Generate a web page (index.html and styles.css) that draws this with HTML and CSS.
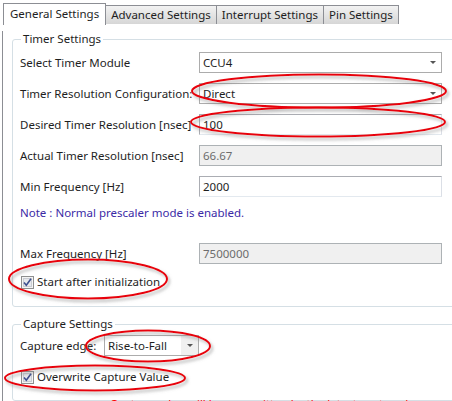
FILE: index.html
```html
<!DOCTYPE html>
<html>
<head>
<meta charset="utf-8">
<link rel="stylesheet" href="styles.css">
</head>
<body>
<div class="tabs">
  <div class="tab active">General Settings</div>
  <div class="tab">Advanced Settings</div>
  <div class="tab">Interrupt Settings</div>
  <div class="tab">Pin Settings</div>
</div>
<div class="panel">
  <fieldset class="group timer">
    <legend>Timer Settings</legend>
    <div class="form">
      <label class="lbl">Select Timer Module</label>
      <div class="box combo"><span>CCU4</span><span class="btn"><i class="arrow"></i></span></div>
      <label class="lbl">Timer Resolution Configuration:</label>
      <div class="box combo"><span>Direct</span><span class="btn"><i class="arrow"></i></span></div>
      <label class="lbl">Desired Timer Resolution [nsec]</label>
      <div class="box">100</div>
      <label class="lbl">Actual Timer Resolution [nsec]</label>
      <div class="box disabled">66.67</div>
      <label class="lbl">Min Frequency [Hz]</label>
      <div class="box">2000</div>
    </div>
    <div class="note">Note : Normal prescaler mode is enabled.</div>
    <div class="form max">
      <label class="lbl">Max Frequency [Hz]</label>
      <div class="box disabled">7500000</div>
    </div>
    <div class="check">
      <svg class="cb" width="13" height="13" viewBox="0 0 13 13"><rect x="0.5" y="0.5" width="12" height="12" fill="#f4f4f4" stroke="#8e8f8f"/><rect x="2.5" y="2.5" width="8" height="8" fill="#e6e8ec" stroke="#c9ccd2"/><path d="M3 6.5 L5.3 9.2 L10 2.8" fill="none" stroke="#3d4f8e" stroke-width="1.6"/></svg>
      <span>Start after initialization</span>
    </div>
  </fieldset>
  <fieldset class="group capture">
    <legend>Capture Settings</legend>
    <div class="edge">
      <label class="lbl">Capture edge:</label>
      <div class="box combo small"><span>Rise-to-Fall</span><span class="btn shaded"><i class="arrow"></i></span></div>
    </div>
    <div class="check second">
      <svg class="cb" width="13" height="13" viewBox="0 0 13 13"><rect x="0.5" y="0.5" width="12" height="12" fill="#f4f4f4" stroke="#8e8f8f"/><rect x="2.5" y="2.5" width="8" height="8" fill="#e6e8ec" stroke="#c9ccd2"/><path d="M3 6.5 L5.3 9.2 L10 2.8" fill="none" stroke="#3d4f8e" stroke-width="1.6"/></svg>
      <span>Overwrite Capture Value</span>
    </div>
    <div class="warn">Capture value will be overwritten by the latest captured one</div>
  </fieldset>
</div>
<svg class="marks" width="452" height="401" viewBox="0 0 452 401">
  <defs>
    <filter id="sh" x="-10%" y="-30%" width="120%" height="160%">
      <feDropShadow dx="2" dy="2.5" stdDeviation="1.4" flood-color="#777" flood-opacity="0.55"/>
    </filter>
  </defs>
  <g fill="none" stroke="#e8060a" stroke-width="2" filter="url(#sh)">
    <ellipse cx="319" cy="91" rx="127" ry="16.5"/>
    <ellipse cx="318" cy="122" rx="127" ry="14.5"/>
    <ellipse cx="88" cy="279" rx="79" ry="19.5"/>
    <ellipse cx="148" cy="346" rx="62" ry="15.5"/>
    <ellipse cx="95" cy="378" rx="90" ry="12.5"/>
  </g>
</svg>
</body>
</html>
```

FILE: styles.css
```css
html, body {
  margin: 0;
  padding: 0;
  background: #ffffff;
}
body {
  width: 452px;
  height: 401px;
  overflow: hidden;
  position: relative;
  font-family: "Noto Sans", "Open Sans", sans-serif;
  font-size: 11.5px;
  color: #1e1e1e;
}
.tabs {
  display: flex;
  align-items: flex-end;
  height: 24px;
  padding-left: 3px;
  box-sizing: border-box;
}
.tab {
  height: 19px;
  line-height: 18px;
  padding: 0 5px;
  border: 1px solid #8c8e94;
  border-bottom: none;
  border-left: none;
  background: linear-gradient(#f2f2f2, #e4e4e4 50%, #d6d6d6);
  box-sizing: border-box;
  white-space: nowrap;
}
.tab.active {
  height: 22px;
  line-height: 19px;
  padding: 0 6px;
  border-left: 1px solid #8c8e94;
  background: #ffffff;
  margin-bottom: -1px;
  position: relative;
}
.panel {
  border-left: 1px solid #8c8e94;
  margin-left: 2px;
  padding-left: 9px;
  height: 380px;
}
.group {
  border: 1px solid #d5dfe5;
  border-radius: 3px;
  margin: 0 -30px 0 0;
  padding: 0 0 0 7px;
  min-width: 0;
}
.group legend {
  padding: 0 2px;
  margin-left: 1px;
  line-height: 16px;
  height: 16px;
}
.timer {
  margin-top: 7px;
  padding-top: 5px;
  padding-bottom: 16px;
}
.capture {
  margin-top: 9px;
  padding-top: 3px;
  height: 80px;
}
.form {
  display: grid;
  grid-template-columns: 179px 243px;
  grid-auto-rows: 21px;
  row-gap: 10px;
  align-items: center;
}
.lbl {
  line-height: 16px;
  white-space: nowrap;
}
.box {
  height: 21px;
  box-sizing: border-box;
  border: 1px solid #abadb3;
  border-right-color: #dbdfe6;
  border-bottom-color: #e3e9ef;
  line-height: 19px;
  padding-left: 3px;
  background: #ffffff;
  display: flex;
}
.box.disabled {
  background: #f0f0f0;
  color: #6d6d6d;
  border-color: #adb2b5;
}
.combo {
  justify-content: space-between;
  border-color: #acacac;
}
.combo .btn {
  width: 17px;
  display: flex;
  align-items: center;
  justify-content: center;
}
.combo .btn.shaded {
  background: #f0f0f0;
}
.arrow {
  width: 0;
  height: 0;
  border-left: 3px solid transparent;
  border-right: 3px solid transparent;
  border-top: 3px solid #555;
}
.note {
  color: #3b2aa6;
  line-height: 16px;
  margin-top: 8px;
}
.max {
  margin-top: 22px;
}
.check {
  display: flex;
  align-items: center;
  gap: 3px;
  line-height: 16px;
  margin-top: 10px;
  margin-left: 1px;
}
.edge {
  display: flex;
  align-items: center;
  gap: 0;
}
.edge .lbl {
  width: 84px;
}
.box.small {
  width: 95px;
}
.check.second {
  margin-top: 13px;
}
.warn {
  color: #ff0000;
  margin-top: 11px;
  padding-left: 90px;
  line-height: 16px;
  white-space: nowrap;
}
.marks {
  position: absolute;
  left: 0;
  top: 0;
  pointer-events: none;
}
```
